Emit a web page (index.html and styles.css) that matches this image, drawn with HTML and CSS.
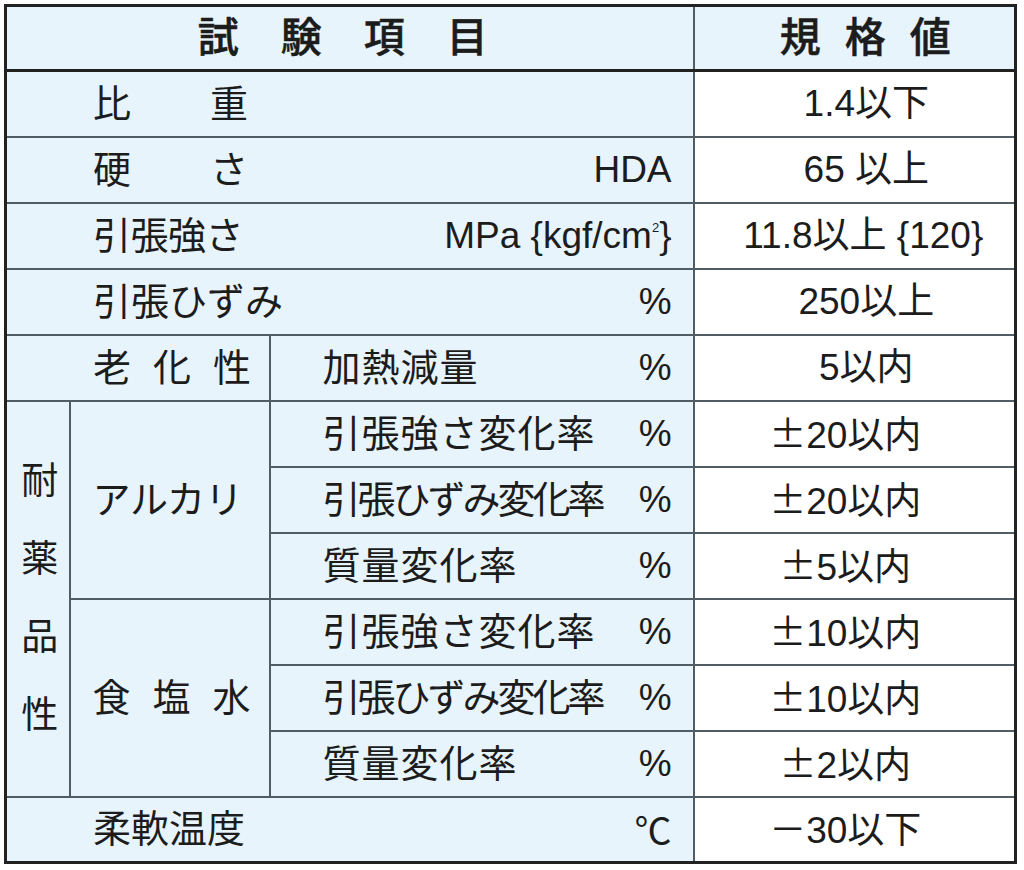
FILE: index.html
```html
<!DOCTYPE html>
<html lang="ja">
<head>
<meta charset="utf-8">
<title>試験項目 規格値</title>
<link rel="stylesheet" href="styles.css">
</head>
<body>
<div class="sheet">
<table class="spec">
  <colgroup>
    <col class="col-group">
    <col class="col-sub">
    <col class="col-item">
    <col class="col-value">
  </colgroup>
  <thead>
    <tr class="row-head">
      <th colspan="3" class="head head--items">
        <div class="head-letters head-letters--wide"><span>試</span><span>験</span><span>項</span><span>目</span></div>
      </th>
      <th class="head head--value">
        <div class="head-letters head-letters--narrow"><span>規</span><span>格</span><span>値</span></div>
      </th>
    </tr>
  </thead>
  <tbody>
    <tr>
      <td colspan="3" class="item item--wide"><div class="item-row"><span class="label label--spread">比重</span></div></td>
      <td class="value">1.4以下</td>
    </tr>
    <tr>
      <td colspan="3" class="item item--wide"><div class="item-row"><span class="label label--spread">硬さ</span><span class="unit">HDA</span></div></td>
      <td class="value">65 以上</td>
    </tr>
    <tr>
      <td colspan="3" class="item item--wide"><div class="item-row"><span class="label label--narrow">引張強さ</span><span class="unit">MPa {kgf/cm<span class="sup">2</span>}</span></div></td>
      <td class="value value--mid">11.8以上 {120}</td>
    </tr>
    <tr>
      <td colspan="3" class="item item--wide"><div class="item-row"><span class="label">引張ひずみ</span><span class="unit">%</span></div></td>
      <td class="value">250以上</td>
    </tr>
    <tr>
      <td colspan="2" class="item item--wide"><span class="label label--mid">老化性</span></td>
      <td class="item item--sub"><div class="item-row"><span class="label label--loose">加熱減量</span><span class="unit">%</span></div></td>
      <td class="value">5以内</td>
    </tr>
    <tr>
      <td rowspan="6" class="group"><div class="vert"><span>耐</span><span>薬</span><span>品</span><span>性</span></div></td>
      <td rowspan="3" class="sub"><span class="label label--tight">アルカリ</span></td>
      <td class="item item--sub"><div class="item-row"><span class="label label--loose">引張強さ変化率</span><span class="unit">%</span></div></td>
      <td class="value value--signed"><span class="fw">±</span>20以内</td>
    </tr>
    <tr>
      <td class="item item--sub"><div class="item-row"><span class="label label--kana">引張ひずみ変化率</span><span class="unit">%</span></div></td>
      <td class="value value--signed"><span class="fw">±</span>20以内</td>
    </tr>
    <tr>
      <td class="item item--sub"><div class="item-row"><span class="label label--loose">質量変化率</span><span class="unit">%</span></div></td>
      <td class="value value--signed"><span class="fw">±</span>5以内</td>
    </tr>
    <tr>
      <td rowspan="3" class="sub"><span class="label label--mid">食塩水</span></td>
      <td class="item item--sub"><div class="item-row"><span class="label label--loose">引張強さ変化率</span><span class="unit">%</span></div></td>
      <td class="value value--signed"><span class="fw">±</span>10以内</td>
    </tr>
    <tr>
      <td class="item item--sub"><div class="item-row"><span class="label label--kana">引張ひずみ変化率</span><span class="unit">%</span></div></td>
      <td class="value value--signed"><span class="fw">±</span>10以内</td>
    </tr>
    <tr>
      <td class="item item--sub"><div class="item-row"><span class="label label--loose">質量変化率</span><span class="unit">%</span></div></td>
      <td class="value value--signed"><span class="fw">±</span>2以内</td>
    </tr>
    <tr>
      <td colspan="3" class="item item--wide"><div class="item-row"><span class="label">柔軟温度</span><span class="unit unit--cjk">℃</span></div></td>
      <td class="value value--signed"><span class="fw">－</span>30以下</td>
    </tr>
  </tbody>
</table>
</div>
</body>
</html>
```

FILE: styles.css
```css
html, body {
  margin: 0;
  background: #ffffff;
}

body {
  font-family: "Liberation Sans", "Noto Sans CJK JP", sans-serif;
  color: #1c1c1c;
}

.sheet {
  padding: 4px 0 0 4px;
}

.spec {
  border-collapse: collapse;
  table-layout: fixed;
  width: 1010px;
  border: 3px solid #222222;
  font-size: 37px;
  line-height: 1;
}

.col-group { width: 64px; }
.col-sub { width: 200px; }
.col-item { width: 424px; }
.col-value { width: 322px; }

.spec tr {
  height: 66px;
}

.spec .row-head {
  height: 65px;
}

.spec th,
.spec td {
  border: 2px solid #525c64;
  background: #e8f4fb;
  padding: 0;
  vertical-align: middle;
  font-weight: 400;
  white-space: nowrap;
}

.spec .head {
  border-bottom: 3px solid #222222;
  font-size: 41px;
  font-weight: 500;
  -webkit-text-stroke: 0.5px #1c1c1c;
}

.head-letters {
  display: flex;
  justify-content: center;
}

.head-letters--wide {
  gap: 42px;
  padding-right: 14px;
}

.head-letters--narrow {
  gap: 24px;
  padding-left: 22px;
}

.spec .item--wide {
  padding-left: 86px;
  padding-right: 21px;
}

.spec .item--sub {
  padding-left: 52px;
  padding-right: 21px;
}

.item-row {
  display: flex;
  justify-content: space-between;
  align-items: center;
}

.label {
  white-space: nowrap;
  font-size: 38px;
}

.label--spread {
  letter-spacing: 79px;
}

.label--mid {
  letter-spacing: 22px;
}

.label--tight {
  letter-spacing: 0;
}

.label--narrow {
  letter-spacing: -0.5px;
}

.label--loose {
  letter-spacing: 1px;
}

.label--kana {
  letter-spacing: -3px;
}

.unit--cjk {
  font-family: "Noto Sans CJK JP", sans-serif;
}

.sup {
  font-size: 13px;
  vertical-align: 16px;
}

.spec .sub {
  padding-left: 22px;
}

.spec .group {
  text-align: center;
}

.vert {
  display: flex;
  flex-direction: column;
  align-items: center;
  gap: 41px;
  padding-left: 4px;
}

.spec .value {
  background: #ffffff;
  text-align: center;
  padding-left: 24px;
}

.spec .value--mid {
  padding-left: 18px;
}

.spec .value--signed {
  padding-left: 0;
  padding-right: 18px;
}

.fw {
  font-family: "Noto Sans CJK JP", sans-serif;
  font-feature-settings: "fwid" 1;
}
```
